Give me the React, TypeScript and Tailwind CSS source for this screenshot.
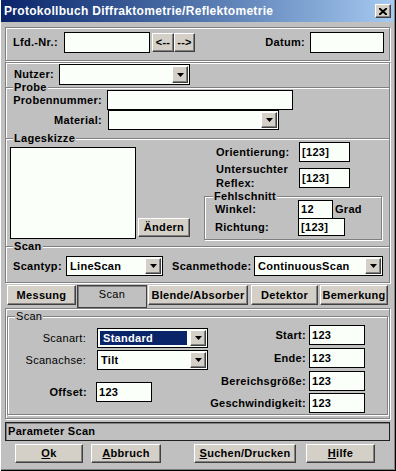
import React from "react";

const raised =
  "bg-[#d4d0c8] border border-t-white border-l-white border-r-[#404040] border-b-[#404040] shadow-[inset_-1px_-1px_0_#808080]";
const etched = "border border-[#808080] shadow-[inset_1px_1px_0_#fff,1px_1px_0_#fff]";

function Field({ className = "", value = "" }: { className?: string; value?: string }) {
  return (
    <div className={`flex items-center border border-black bg-[#fafffa] pl-[2px] ${className}`}>
      {value}
    </div>
  );
}

function Combo({ className = "", value = "", selected = false }: { className?: string; value?: string; selected?: boolean }) {
  return (
    <div className={`flex border border-black bg-[#fafffa] ${className}`}>
      <div
        className={`flex flex-1 items-center pl-[3px] ${selected ? "m-[2px] bg-[#0a246a] pl-[1px] text-white" : ""}`}
      >
        {value}
      </div>
      <div className={`m-[1px] flex w-[16px] items-center justify-center ${raised}`}>
        <svg width="7" height="4" viewBox="0 0 7 4">
          <path d="M0 0h7L3.5 4z" fill="#000" />
        </svg>
      </div>
    </div>
  );
}

function Btn({ className = "", children }: { className?: string; children: React.ReactNode }) {
  return <div className={`flex items-center justify-center ${raised} ${className}`}>{children}</div>;
}

function Line({ title, className = "", normal = false }: { title: string; className?: string; normal?: boolean }) {
  return (
    <div className={`relative h-[2px] border-t border-[#808080] shadow-[inset_0_1px_0_#fff] ${className}`}>
      <span
        className={`absolute left-[7px] top-[-7px] bg-[#c0c0c0] px-[1px] leading-[12px] ${normal ? "font-normal" : ""}`}
      >
        {title}
      </span>
    </div>
  );
}

export default function App() {
  return (
    <div className="h-[471px] w-[396px] overflow-hidden bg-[#c0c0c0] font-['Liberation_Sans',Arial,sans-serif] text-[11px] font-bold leading-none tracking-[0.3px] text-black shadow-[inset_1px_0_0_#fff,inset_-1px_-1px_0_#000,inset_-2px_-2px_0_#808080]">
      {/* title */}
      <div className="ml-[1px] mr-[2px] flex h-[22px] items-center justify-between bg-gradient-to-r from-[#0a246a] to-[#a6caf0] pl-[3px] pr-[3px] text-[12px] text-white">
        <span>Protokollbuch Diffraktometrie/Reflektometrie</span>
        <div className={`flex h-[14px] w-[16px] items-center justify-center ${raised}`}>
          <svg width="8" height="7" viewBox="0 0 8 7">
            <path d="M0 0l8 7M8 0L0 7" stroke="#000" strokeWidth="2" />
          </svg>
        </div>
      </div>

      <div className="flex flex-col pl-[5px] pt-[5px]">
        {/* Lfd.-Nr. */}
        <div className={`flex h-[34px] w-[385px] items-start pl-[7px] pr-[5px] pt-[4px] ${etched}`}>
          <span className="flex h-[21px] w-[51px] items-center">Lfd.-Nr.:</span>
          <Field className="h-[21px] w-[86px]" />
          <Btn className="ml-[2px] mt-[1px] h-[19px] w-[22px]">&lt;--</Btn>
          <Btn className="mt-[1px] h-[19px] w-[21px]">--&gt;</Btn>
          <span className="flex h-[21px] flex-1 items-center justify-end pr-[5px]">Datum:</span>
          <Field className="h-[21px] w-[74px]" />
        </div>

        {/* main panel */}
        <div className={`mt-[1px] flex h-[221px] w-[385px] flex-col ${etched}`}>
          <div className="mt-[1px] flex items-center pl-[8px]">
            <span className="w-[45px]">Nutzer:</span>
            <Combo className="h-[21px] w-[131px]" />
          </div>

          <Line title="Probe" className="mt-[2px]" />
          <div className="mt-[1px] flex items-center">
            <span className="w-[96px] text-right">Probennummer:</span>
            <Field className="ml-[5px] h-[20px] w-[186px]" />
          </div>
          <div className="flex items-center">
            <span className="w-[96px] text-right">Material:</span>
            <Combo className="ml-[6px] h-[20px] w-[171px]" />
          </div>

          <Line title="Lageskizze" className="mt-[8px]" />
          <div className="flex">
            <div className="ml-[4px] mt-[7px] h-[92px] w-[126px] border border-black bg-[#fafffa]" />
            <Btn className="ml-[2px] mt-[78px] h-[19px] w-[52px]">Ändern</Btn>
            <div className="ml-[14px] flex w-[179px] flex-col">
              <div className="mt-[2px] flex items-center pl-[12px]">
                <span className="w-[83px]">Orientierung:</span>
                <Field className="h-[20px] w-[51px]" value="[123]" />
              </div>
              <div className="flex h-[28px] items-end pl-[12px]">
                <span className="w-[83px] self-start leading-[14px]">
                  Untersuchter
                  <br />
                  Reflex:
                </span>
                <Field className="mb-[2px] h-[20px] w-[51px]" value="[123]" />
              </div>
              <div className={`relative mt-[6px] h-[44px] w-[178px] pl-[10px] ${etched}`}>
                <span className="absolute left-[8px] top-[-7px] bg-[#c0c0c0] px-[1px] leading-[12px]">Fehlschnitt</span>
                <div className="mt-[3px] flex items-center">
                  <span className="w-[83px]">Winkel:</span>
                  <Field className="h-[19px] w-[35px]" value="12" />
                  <span className="ml-[2px]">Grad</span>
                </div>
                <div className="mt-[-1px] flex items-center">
                  <span className="w-[83px]">Richtung:</span>
                  <Field className="h-[18px] w-[47px]" value="[123]" />
                </div>
              </div>
            </div>
          </div>

          <Line title="Scan" className="mt-[6px]" />
          <div className="mt-[8px] flex items-center pl-[7px]">
            <span className="w-[53px]">Scantyp:</span>
            <Combo className="h-[20px] w-[97px]" value="LineScan" />
            <span className="ml-[9px] w-[82px]">Scanmethode:</span>
            <Combo className="h-[20px] w-[129px]" value="ContinuousScan" />
          </div>
        </div>

        {/* tabs */}
        <div className="mt-[2px] flex h-[23px] items-start">
          <Btn className="ml-[2px] h-[20px] w-[69px]">Messung</Btn>
          <div className="ml-[1px] flex h-[23px] w-[70px] justify-center border border-[#404040] pt-[3px] font-normal shadow-[inset_1px_1px_0_#808080]">
            Scan
          </div>
          <Btn className="ml-[1px] h-[20px] w-[100px]">Blende/Absorber</Btn>
          <Btn className="ml-[3px] h-[20px] w-[67px]">Detektor</Btn>
          <Btn className="ml-[2px] h-[20px] w-[68px]">Bemerkung</Btn>
        </div>

        {/* tab page */}
        <div className={`h-[111px] w-[385px] pl-[1px] pt-[7px] ${etched}`}>
          <div className={`relative flex h-[99px] w-[381px] justify-between ${etched}`}>
            <span className="absolute left-[7px] top-[-7px] bg-[#c0c0c0] px-[1px] font-normal leading-[12px]">Scan</span>
            <div className="flex flex-col">
              <div className="mt-[11px] flex items-center">
                <span className="w-[78px] text-right font-normal">Scanart:</span>
                <Combo className="ml-[11px] h-[20px] w-[111px]" value="Standard" selected />
              </div>
              <div className="mt-[2px] flex items-center">
                <span className="w-[78px] text-right font-normal">Scanachse:</span>
                <Combo className="ml-[11px] h-[20px] w-[111px]" value="Tilt" />
              </div>
              <div className="mt-[12px] flex items-center">
                <span className="w-[79px] text-right">Offset:</span>
                <Field className="ml-[9px] h-[20px] w-[56px]" value="123" />
              </div>
            </div>
            <div className="flex flex-col items-end pr-[22px]">
              <div className="mt-[8px] flex items-center">
                <span>Start:</span>
                <Field className="ml-[3px] h-[20px] w-[56px]" value="123" />
              </div>
              <div className="mt-[3px] flex items-center">
                <span>Ende:</span>
                <Field className="ml-[3px] h-[20px] w-[56px]" value="123" />
              </div>
              <div className="mt-[3px] flex items-center">
                <span>Bereichsgröße:</span>
                <Field className="ml-[3px] h-[20px] w-[56px]" value="123" />
              </div>
              <div className="mt-[2px] flex items-center">
                <span>Geschwindigkeit:</span>
                <Field className="ml-[3px] h-[20px] w-[56px]" value="123" />
              </div>
            </div>
          </div>
        </div>

        {/* status */}
        <div className="mt-[3px] flex h-[19px] w-[385px] items-center border border-[#202020] pl-[2px] shadow-[inset_1px_1px_0_#808080]">
          Parameter Scan
        </div>

        {/* buttons */}
        <div className="mt-[3px] flex h-[19px]">
          <Btn className="ml-[10px] h-[19px] w-[68px]">
            <u>O</u>k
          </Btn>
          <Btn className="ml-[8px] h-[19px] w-[70px]">
            <u>A</u>bbruch
          </Btn>
          <Btn className="ml-[33px] h-[19px] w-[102px]">
            <u>S</u>uchen/Drucken
          </Btn>
          <Btn className="ml-[10px] h-[19px] w-[69px]">
            <u>H</u>ilfe
          </Btn>
        </div>
      </div>
    </div>
  );
}
